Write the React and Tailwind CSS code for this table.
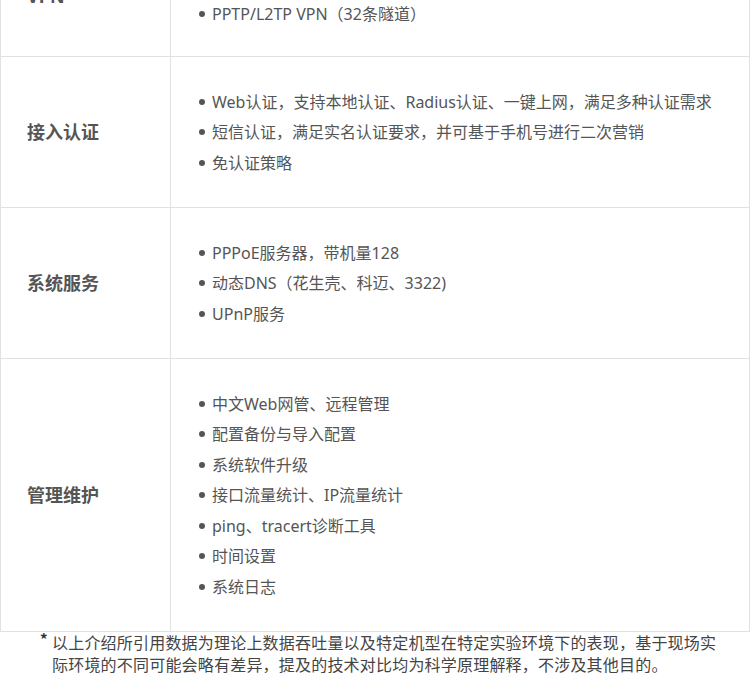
import React from 'react';

const rows = [
  {
    label: 'VPN',
    items: ['IPSec VPN（32条隧道）', 'PPTP/L2TP VPN（32条隧道）'],
    pad: 'pt-[32px] pb-[26.5px]',
  },
  {
    label: '接入认证',
    items: [
      'Web认证，支持本地认证、Radius认证、一键上网，满足多种认证需求',
      '短信认证，满足实名认证要求，并可基于手机号进行二次营销',
      '免认证策略',
    ],
    pad: 'pt-[30px] pb-[28.5px]',
  },
  {
    label: '系统服务',
    items: ['PPPoE服务器，带机量128', '动态DNS（花生壳、科迈、3322)', 'UPnP服务'],
    pad: 'pt-[30px] pb-[28.5px]',
  },
  {
    label: '管理维护',
    items: [
      '中文Web网管、远程管理',
      '配置备份与导入配置',
      '系统软件升级',
      '接口流量统计、IP流量统计',
      'ping、tracert诊断工具',
      '时间设置',
      '系统日志',
    ],
    pad: 'pt-[30px] pb-[28.5px]',
  },
];

const font = { fontFamily: '"Noto Sans", "Noto Sans CJK SC", sans-serif' };

const SpecRow = ({ label, items, pad }) => (
  <div className="flex border-b border-[#e1e1e1]">
    <div className="w-[170px] shrink-0 border-r border-[#e1e1e1] pl-[26px] pt-[1px] flex items-center">
      <span className="text-[18px] font-bold text-[#555]">{label}</span>
    </div>
    <ul className={`flex-1 pl-[28px] ${pad}`}>
      {items.map((item) => (
        <li key={item} className="flex items-center h-[30.5px] text-[16px] text-[#555] whitespace-nowrap">
          <span className="w-[6px] h-[6px] rounded-full bg-[#555] mr-[7px] shrink-0" />
          {item}
        </li>
      ))}
    </ul>
  </div>
);

export default function App() {
  return (
    <div className="w-[750px] h-[678px] overflow-hidden bg-white" style={font}>
      <div className="-mt-[64px] border-x border-[#e1e1e1]">
        {rows.map((row) => (
          <SpecRow key={row.label} {...row} />
        ))}
      </div>

      {/* footnote */}
      <p
        className="relative -mt-[1px] pl-[52px] w-[720px] text-[16px] leading-[22px] tracking-[0.2px] text-[#444]"
        style={{ fontFamily: '"Noto Sans CJK SC", sans-serif' }}
      >
        <span className="absolute left-[40px] -top-[3px] text-[15px] font-bold text-[#333]">*</span>
        以上介绍所引用数据为理论上数据吞吐量以及特定机型在特定实验环境下的表现，基于现场实际环境的不同可能会略有差异，提及的技术对比均为科学原理解释，不涉及其他目的。
      </p>
    </div>
  );
}
